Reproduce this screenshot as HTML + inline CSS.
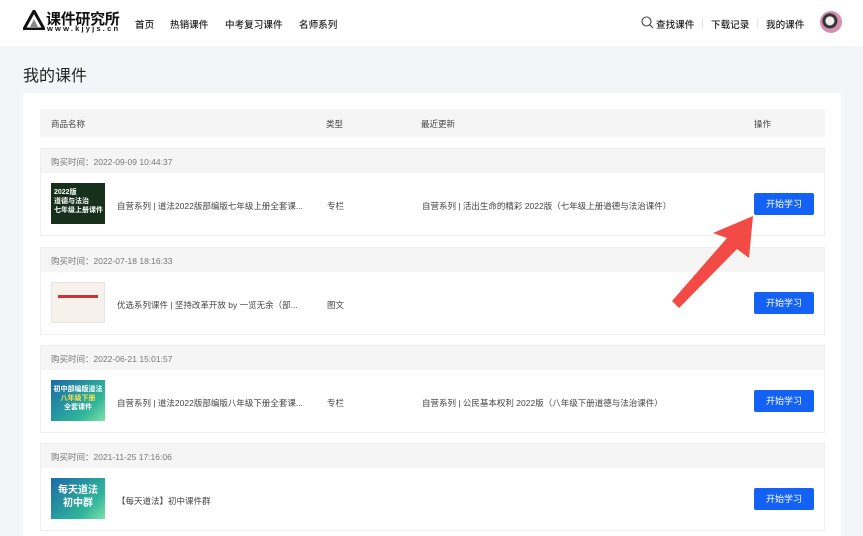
<!DOCTYPE html>
<html style="overflow:hidden;height:536px"><head><meta charset="utf-8"><style>
*{margin:0;padding:0;box-sizing:border-box}
body{width:863px;height:536px;overflow:hidden;background:#f4f5f8;font-family:"Liberation Sans","Noto Sans CJK SC",sans-serif;color:#333;position:relative}
.nav{position:absolute;left:0;top:0;width:863px;height:46px;background:#fff}
.nav .t{position:absolute;font-size:9.6px;color:#222;top:17px;font-weight:500}
.logo{position:absolute;left:23px;top:10px}
.title{position:absolute;left:23px;top:62px;font-size:16px;color:#222}
.panel{position:absolute;left:23px;top:93px;width:818px;height:443px;background:#fff}
.th{position:absolute;left:40px;top:109px;width:785px;height:28px;background:#f5f5f5;font-size:8.5px;color:#444}
.th span{position:absolute;top:9px}
.card{position:absolute;left:40px;width:785px;height:88px;border:1px solid #eee;background:#fff;font-size:8.5px}
.card .h{height:24px;background:#f5f5f5;color:#777;padding:7px 0 0 10px}
.card .th2{position:absolute;left:10px;top:34px;width:54px;height:41px}
.card .n{position:absolute;left:76px;top:51px;color:#444}
.card .ty{position:absolute;left:286px;top:51px;color:#444}
.card .u{position:absolute;left:381px;top:51px;color:#444}
.btn{position:absolute;left:713px;top:44px;width:60px;height:22px;background:#1462f5;color:#fff;border-radius:2px;text-align:center;line-height:22px;font-size:9px}
.tt{color:#fff;font-weight:bold;font-size:7px;text-align:center;line-height:9px;padding-top:5px}
</style></head><body>
<div class="nav">
 <div class="logo"><svg width="22" height="20"><polygon points="11,1 21,19 1,19" fill="none" stroke="#111" stroke-width="3"/><polygon points="11,9 15,17 7,17" fill="#888"/></svg></div>
 <div style="position:absolute;left:46px;top:8px;font-size:15px;font-weight:bold;color:#111;letter-spacing:-0.3px">课件研究所</div>
 <div style="position:absolute;left:47px;top:24px;font-size:7.5px;font-weight:bold;color:#111;letter-spacing:2.2px">www.kjyjs.cn</div>
 <div class="t" style="left:135px">首页</div>
 <div class="t" style="left:170px">热销课件</div>
 <div class="t" style="left:225px">中考复习课件</div>
 <div class="t" style="left:299px">名师系列</div>
 <svg style="position:absolute;left:641px;top:16px" width="13" height="13"><circle cx="5.5" cy="5.5" r="4.5" fill="none" stroke="#444" stroke-width="1.1"/><line x1="9" y1="9" x2="12" y2="12" stroke="#444" stroke-width="1.1"/></svg>
 <div class="t" style="left:656px">查找课件</div>
 <div style="position:absolute;left:702px;top:18px;width:1px;height:10px;background:#e5e5e5"></div>
 <div class="t" style="left:711px">下载记录</div>
 <div style="position:absolute;left:757px;top:18px;width:1px;height:10px;background:#e5e5e5"></div>
 <div class="t" style="left:766px">我的课件</div>
 <div style="position:absolute;left:820px;top:11px;width:22px;height:22px;border-radius:50%;background:radial-gradient(circle at 45% 45%,#eee 0 4px,#333 5px 7px,#d48fae 8px)"></div>
</div>
<div class="title">我的课件</div>
<div class="panel"></div>
<div class="th"><span style="left:11px">商品名称</span><span style="left:286px">类型</span><span style="left:381px">最近更新</span><span style="left:714px">操作</span></div>

<div class="card" style="top:148px"><div class="h">购买时间：2022-09-09 10:44:37</div>
<div class="th2" style="background:#16301c"><div class="tt" style="text-align:left;padding-left:3px">2022版<br>道德与法治<br>七年级上册课件</div></div>
<div class="n">自营系列 | 道法2022版部编版七年级上册全套课...</div><div class="ty">专栏</div><div class="u">自营系列 | 活出生命的精彩 2022版（七年级上册道德与法治课件）</div><div class="btn">开始学习</div></div>

<div class="card" style="top:247px"><div class="h">购买时间：2022-07-18 18:16:33</div>
<div class="th2" style="background:#f6f1ea;border:1px solid #e5e5e5"><div style="margin:12px 6px;height:3px;background:#c33"></div></div>
<div class="n">优选系列课件 | 坚持改革开放 by 一览无余（部...</div><div class="ty">图文</div><div class="btn">开始学习</div></div>

<div class="card" style="top:345px"><div class="h">购买时间：2022-06-21 15:01:57</div>
<div class="th2" style="background:linear-gradient(135deg,#1b6aa8,#2fb59a 70%,#7fe0a8)"><div class="tt">初中部编版道法<br><span style="color:#ffe14a">八年级下册</span><br>全套课件</div></div>
<div class="n">自营系列 | 道法2022版部编版八年级下册全套课...</div><div class="ty">专栏</div><div class="u">自营系列 | 公民基本权利 2022版（八年级下册道德与法治课件）</div><div class="btn">开始学习</div></div>

<div class="card" style="top:443px"><div class="h">购买时间：2021-11-25 17:16:06</div>
<div class="th2" style="background:linear-gradient(135deg,#1b6aa8,#2fb59a 70%,#7fe0a8)"><div class="tt" style="font-size:10px;line-height:13px;padding-top:6px">每天道法<br>初中群</div></div>
<div class="n">【每天道法】初中课件群</div><div class="btn">开始学习</div></div>

<svg style="position:absolute;left:0;top:0" width="863" height="536"><polygon points="753,216 749,258 737,249 679,308 672,301 727,238 713,233" fill="#f44a45"/></svg>
</body></html>
